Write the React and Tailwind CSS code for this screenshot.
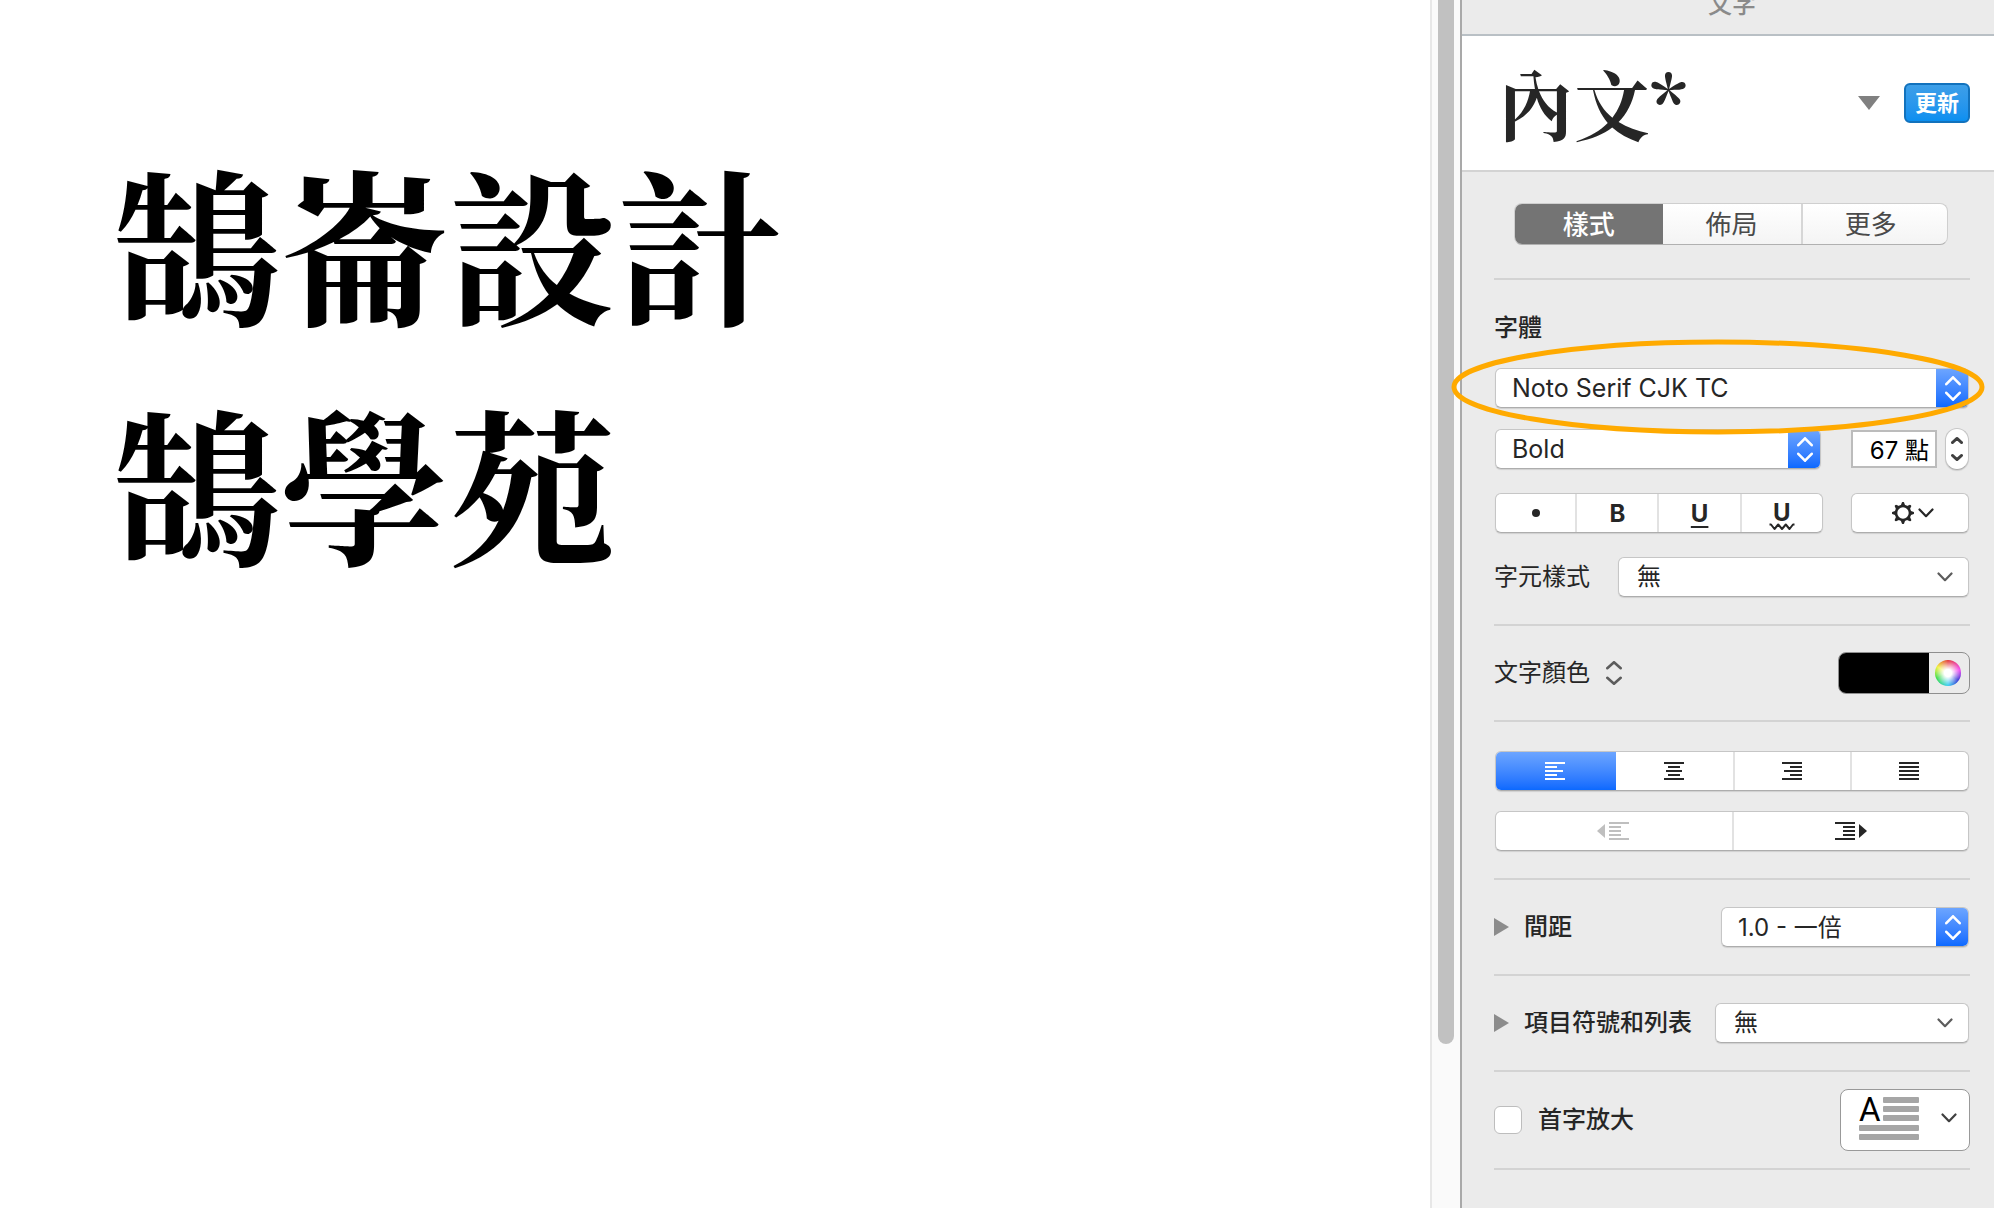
import React, { useState } from 'react';

const ALIGNMENTS = [
  { id: 'left', label: '靠左對齊', lines: [[0, 20], [0, 12], [0, 18], [0, 12], [0, 20]] },
  { id: 'center', label: '置中', lines: [[0, 20], [4, 12], [2, 16], [4, 12], [0, 20]] },
  { id: 'right', label: '靠右對齊', lines: [[0, 20], [8, 12], [2, 18], [8, 12], [0, 20]] },
  { id: 'justify', label: '左右對齊', lines: [[0, 20], [0, 20], [0, 20], [0, 20], [0, 20]] },
];

const TABS = ['樣式', '佈局', '更多'];

const BOX = 'border border-[#c6c6c6] border-b-[#adadad] bg-white shadow-[0_1px_1px_rgba(0,0,0,0.12)]';

function LinesIcon({ lines }) {
  return (
    <svg width="20" height="18" viewBox="0 0 20 18" fill="currentColor" aria-hidden="true">
      {lines.map(([x, w], i) => (
        <rect key={i} x={x} y={i * 4} width={w} height="2" />
      ))}
    </svg>
  );
}

function ChevronDown({ className }) {
  return (
    <svg className={className} width="16" height="10" viewBox="0 0 16 10" fill="none" stroke="currentColor" strokeWidth="2.2" strokeLinecap="round" strokeLinejoin="round" aria-hidden="true">
      <path d="M1.5 1.5 8 8.2 14.5 1.5" />
    </svg>
  );
}

function UpDown({ width, height, gap, strokeWidth }) {
  const h = (height - gap) / 2;
  const p = strokeWidth / 2;
  return (
    <svg width={width} height={height} viewBox={`0 0 ${width} ${height}`} fill="none" stroke="currentColor" strokeWidth={strokeWidth} strokeLinecap="round" strokeLinejoin="round" aria-hidden="true">
      <path d={`M${p} ${h - p} ${width / 2} ${p} ${width - p} ${h - p}`} />
      <path d={`M${p} ${h + gap + p} ${width / 2} ${height - p} ${width - p} ${h + gap + p}`} />
    </svg>
  );
}

// Combo box with the blue arrow cap on the right
function ComboSelect({ label, options, className }) {
  return (
    <div className={`flex h-10 overflow-hidden rounded-md ${BOX} ${className}`}>
      <select aria-label={label} className="min-w-0 flex-1 appearance-none bg-transparent pt-0.5 pl-4 outline-none">
        {options.map((o) => (
          <option key={o}>{o}</option>
        ))}
      </select>
      <span className="pointer-events-none -my-px -mr-px flex w-[33px] items-center justify-center bg-linear-to-b from-[#6ea6ff] to-[#0567ff] text-white">
        <UpDown width={16} height={25} gap={6} strokeWidth={2.6} />
      </span>
    </div>
  );
}

// Plain pop-up menu with a thin chevron
function PopupSelect({ id, label, options, className }) {
  return (
    <div className={`flex h-10 items-center rounded-md pr-[15px] ${BOX} ${className}`}>
      <select id={id} aria-label={label} className="h-full min-w-0 flex-1 appearance-none bg-transparent pl-[18px] outline-none">
        {options.map((o) => (
          <option key={o}>{o}</option>
        ))}
      </select>
      <ChevronDown className="pointer-events-none text-[#5c5c5c]" />
    </div>
  );
}

function Disclosure({ children }) {
  return (
    <button type="button" className="flex items-center gap-[15px] font-medium">
      <svg width="15" height="20" viewBox="0 0 15 20" fill="#8c8c8c" aria-hidden="true">
        <path d="M0 1 15 10 0 19Z" />
      </svg>
      {children}
    </button>
  );
}

function GearIcon() {
  return (
    <svg width="22" height="22" viewBox="0 0 22 22" aria-hidden="true">
      <circle cx="11" cy="11" r="7" fill="none" stroke="currentColor" strokeWidth="2.6" />
      <g fill="currentColor">
        {[0, 45, 90, 135, 180, 225, 270, 315].map((a) => (
          <path key={a} d="M8.4 4.4 10 0.2Q11 -0.4 12 0.2L13.6 4.4Z" transform={`rotate(${a} 11 11)`} />
        ))}
      </g>
    </svg>
  );
}

function DropCapIcon() {
  return (
    <svg className="overflow-visible" width="60" height="44" viewBox="0 0 60 44" aria-hidden="true">
      <g fill="#a6a6a6">
        <rect x="24" y="1" width="36" height="6" rx="1" />
        <rect x="24" y="10" width="36" height="6" rx="1" />
        <rect x="24" y="19" width="36" height="6" rx="1" />
        <rect x="0" y="29" width="60" height="6" rx="1" />
        <rect x="0" y="38" width="60" height="6" rx="1" />
      </g>
      <text x="0" y="25" fontSize="33" fontWeight="400" fill="#000" fontFamily="Roboto, sans-serif">A</text>
    </svg>
  );
}

export default function App() {
  const [tab, setTab] = useState('樣式');
  const [align, setAlign] = useState('left');
  const [size, setSize] = useState('67 點');
  const [dropCap, setDropCap] = useState(false);

  return (
    <div className="flex h-screen overflow-hidden bg-white font-[Inter,'Noto_Sans_CJK_TC',sans-serif] text-2xl text-[#262626]">
      {/* Document */}
      <main lang="zh-Hant" className="min-w-0 flex-1 pt-[121px] pl-28 font-['Noto_Serif_CJK_TC','Noto_Serif_TC','Noto_Sans_CJK_TC',serif] text-[168px] leading-[240px] font-bold whitespace-nowrap text-black">
        <p>鵠崙設計</p>
        <p>鵠學苑</p>
      </main>

      {/* Scrollbar */}
      <div className="flex w-[30px] flex-col border-l-2 border-[#e7e7e7] bg-[#fafafa] px-1.5">
        <div className="h-[1044px] w-4 rounded-b-full bg-[#c1c1c1]" />
      </div>

      {/* Inspector */}
      <aside lang="zh-Hant" className="w-[534px] shrink-0 border-l-2 border-[#a9a9a9] bg-[#ebebeb]">
        <h2 className="h-9 overflow-hidden border-b-2 border-[#b9c0c5] pr-6 pl-8 text-center leading-[10px] font-medium text-[#8a8a8a]">文字</h2>

        <div className="flex h-[136px] items-center border-b-2 border-[#d3d3d3] bg-white pr-6 pl-9">
          <h1 className="flex-1 font-['Noto_Serif_CJK_TC','Noto_Serif_TC','Noto_Sans_CJK_TC',serif] text-[76px] leading-none font-bold">內文*</h1>
          <button type="button" aria-label="段落樣式" className="mr-6">
            <svg width="22" height="14" viewBox="0 0 22 14" fill="#808080" aria-hidden="true">
              <path d="M0 0H22L11 14Z" />
            </svg>
          </button>
          <button type="button" className="h-10 w-[66px] rounded-md border-2 border-[#1272bd] bg-linear-to-b from-[#3d9fe8] to-[#0a8ff0] text-[22px] leading-none font-bold text-white">
            更新
          </button>
        </div>

        <div className="divide-y-2 divide-[#d3d3d3] border-b-2 border-transparent pr-6 pl-8">
          <div className="flex h-[108px] items-center pt-[31px] pr-[22px] pb-[33px] pl-5">
            <div className="grid h-[42px] flex-1 grid-cols-[148fr_139fr_147fr] overflow-hidden rounded-lg border border-[#cfcfcf] border-b-[#b0b0b0] bg-linear-to-b from-white to-[#f4f4f4] text-[26px] leading-none">
              {TABS.map((t) => (
                <button
                  key={t}
                  type="button"
                  aria-pressed={t === tab}
                  onClick={() => setTab(t)}
                  className={`pt-0.5 ${t === tab ? '-m-px bg-[#747474] font-medium text-white' : 'border-[#d6d6d6] text-[#4a4a4a] last:border-l-2 last:pr-2'}`}
                >
                  {t}
                </button>
              ))}
            </div>
          </div>

          {/* Font */}
          <section className="pt-[30px] pb-[27px]">
            <h3 className="leading-9 font-medium">字體</h3>
            <div className="relative mt-[22px] px-px">
              <ComboSelect label="字體" options={['Noto Serif CJK TC']} className="w-full text-[25px]" />
              <svg className="pointer-events-none absolute -top-[30px] -left-11 z-10" width="536" height="98" viewBox="0 0 536 98" fill="none" aria-hidden="true">
                <ellipse cx="268" cy="49" rx="264" ry="45" stroke="#ffaa00" strokeWidth="5" />
              </svg>
            </div>
            <div className="mt-5 flex items-center px-px">
              <ComboSelect label="字體粗細" options={['Bold']} className="flex-1 text-[25px]" />
              <input
                aria-label="字體大小"
                value={size}
                onChange={(e) => setSize(e.target.value)}
                className="ml-[30px] h-[38px] w-[86px] border-2 border-[#bcbcbc] bg-white pr-1.5 pb-0.5 text-right text-black outline-none"
              />
              <button type="button" aria-label="調整大小" className={`ml-2 flex h-[42px] w-6 items-center justify-center rounded-full text-[#404040] ${BOX}`}>
                <UpDown width={12} height={24} gap={10} strokeWidth={2.8} />
              </button>
            </div>
            <div className="mt-[23px] flex gap-7 px-px">
              <div className={`grid h-10 flex-1 grid-cols-[79fr_82fr_82fr_82fr] rounded-md leading-none font-bold ${BOX}`}>
                <button type="button" aria-label="項目符號" className="flex items-center justify-center">
                  <span className="size-2 rounded-full bg-[#262626]" />
                </button>
                <button type="button" className="border-l-2 border-[#e2e2e2] pt-0.5">B</button>
                <button type="button" className="border-l-2 border-[#e2e2e2] pt-0.5 underline decoration-2 underline-offset-4">U</button>
                <button type="button" aria-label="波浪底線" className="flex flex-col items-center justify-center border-l-2 border-[#e2e2e2] pt-2">
                  <span className="leading-5">U</span>
                  <svg width="26" height="8" viewBox="0 0 26 8" fill="none" stroke="currentColor" strokeWidth="2" strokeLinejoin="round" aria-hidden="true">
                    <path d="M0.5 1.5H2L5.5 6 9.2 1.5 13 6 16.8 1.5 20.5 6 24 1.5H25.5" />
                  </svg>
                </button>
              </div>
              <button type="button" aria-label="進階選項" className={`flex h-10 w-[118px] items-center justify-center gap-1 rounded-md pl-1.5 ${BOX}`}>
                <GearIcon />
                <ChevronDown />
              </button>
            </div>
            <div className="mt-6 flex items-center gap-7 pr-px">
              <label htmlFor="char-style">字元樣式</label>
              <PopupSelect id="char-style" label="字元樣式" options={['無']} className="flex-1" />
            </div>
          </section>

          {/* Text colour */}
          <section className="flex h-24 items-center justify-between">
            <button type="button" className="flex items-center gap-4">
              文字顏色
              <span className="text-[#5c5c5c]">
                <UpDown width={16} height={24} gap={7} strokeWidth={2.6} />
              </span>
            </button>
            <div className="flex h-[42px] w-[132px] overflow-hidden rounded-lg border border-[#8f8f8f]">
              <button type="button" aria-label="顏色" className="-my-px -ml-px w-[91px] bg-black" />
              <button type="button" aria-label="色輪" className="flex flex-1 items-center justify-center pr-0.5">
                <span className="size-[26px] rounded-full bg-[radial-gradient(circle,white_20%,transparent_75%),conic-gradient(#e02020,#f030f0_75deg,#2020d0_125deg,#20c8f0_180deg,#20d830_245deg,#f0f020_300deg,#e02020)]" />
              </button>
            </div>
          </section>

          {/* Alignment */}
          <section className="px-px pt-[29px] pb-[27px]">
            <div className={`grid h-10 grid-cols-[121fr_117fr_118fr_118fr] overflow-hidden rounded-md ${BOX}`}>
              {ALIGNMENTS.map((a, i) => (
                <button
                  key={a.id}
                  type="button"
                  aria-label={a.label}
                  onClick={() => setAlign(a.id)}
                  className={`flex items-center justify-center pr-0.5 ${a.id === align ? '-my-px -ml-px bg-linear-to-b from-[#6ea6ff] to-[#0567ff] text-white' : i > 1 ? 'border-l-2 border-[#e2e2e2]' : ''}`}
                >
                  <LinesIcon lines={a.lines} />
                </button>
              ))}
            </div>
            <div className={`mt-5 grid h-10 grid-cols-2 rounded-md ${BOX}`}>
              <button type="button" disabled aria-label="減少縮排" className="flex items-center justify-center gap-1 pr-0.5 text-[#bfbfbf]">
                <svg width="8" height="14" viewBox="0 0 8 14" fill="currentColor" aria-hidden="true">
                  <path d="M8 0V14L0 7Z" />
                </svg>
                <LinesIcon lines={[[0, 20], [0, 12], [0, 12], [0, 12], [0, 20]]} />
              </button>
              <button type="button" aria-label="增加縮排" className="flex items-center justify-center gap-1 border-l-2 border-[#e2e2e2]">
                <LinesIcon lines={[[0, 20], [8, 12], [8, 12], [8, 12], [0, 20]]} />
                <svg width="8" height="14" viewBox="0 0 8 14" fill="currentColor" aria-hidden="true">
                  <path d="M0 0V14L8 7Z" />
                </svg>
              </button>
            </div>
          </section>

          {/* Spacing */}
          <section className="flex h-24 items-center justify-between pr-px">
            <Disclosure>間距</Disclosure>
            <ComboSelect label="間距" options={['1.0 - 一倍']} className="w-[248px]" />
          </section>

          {/* Bullets and lists */}
          <section className="flex h-24 items-center justify-between pr-px">
            <Disclosure>項目符號和列表</Disclosure>
            <PopupSelect label="項目符號和列表" options={['無']} className="w-[254px]" />
          </section>

          {/* Drop cap */}
          <section className="flex h-[98px] items-center justify-between">
            <label className="flex items-center gap-4 font-medium">
              <input
                type="checkbox"
                checked={dropCap}
                onChange={(e) => setDropCap(e.target.checked)}
                className="size-7 appearance-none rounded-md border border-[#bdbdbd] bg-white checked:bg-[#0567ff]"
              />
              首字放大
            </label>
            <button type="button" aria-label="首字放大樣式" className="flex h-[62px] w-[130px] items-center justify-between rounded-lg border border-[#999] bg-white pr-3 pb-1 pl-[18px]">
              <DropCapIcon />
              <ChevronDown className="text-[#404040]" />
            </button>
          </section>
          <div className="h-10" />
        </div>
      </aside>
    </div>
  );
}
